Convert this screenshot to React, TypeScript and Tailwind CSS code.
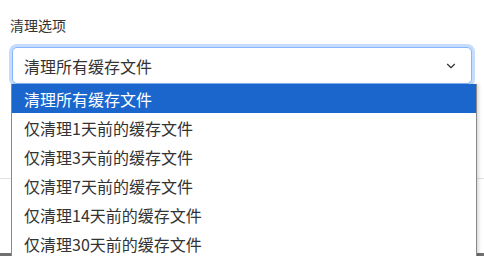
import { ChevronDown } from 'lucide-react'

const options = [
  '清理所有缓存文件',
  '仅清理1天前的缓存文件',
  '仅清理3天前的缓存文件',
  '仅清理7天前的缓存文件',
  '仅清理14天前的缓存文件',
  '仅清理30天前的缓存文件',
]

const App = () => {
  return (
    <main
      className="relative h-[256px] w-[484px] overflow-hidden bg-white text-[#333]"
      style={{ fontFamily: '"Microsoft YaHei", "Noto Sans CJK SC", sans-serif' }}
    >
      <div className="px-[10px] pt-[15px]">
        <label className="block text-[14px] leading-[20px]">清理选项</label>
        <div className="mx-[2px] mt-[12px] flex h-[37px] items-center justify-between rounded-[5px] border border-[#86b7fe] bg-white pl-[11px] pr-[13px] shadow-[0_0_0_3px_#c5dcfc]">
          <span className="text-[16px]">清理所有缓存文件</span>
          <ChevronDown className="h-[14px] w-[14px] text-[#333]" strokeWidth={2} />
        </div>
      </div>

      {/* page content behind the open list */}
      <div className="absolute left-0 right-0 top-[178px] h-px bg-[#e2e2e2]" />
      <div className="absolute bottom-0 left-0 right-0 h-[3px] bg-[#707070]" />

      <ul className="absolute left-[11px] top-[84px] w-[466px] border-x border-[#8a8a8a] bg-white shadow-[2px_0_3px_rgba(0,0,0,0.15)]">
        {options.map((o, i) => (
          <li
            key={o}
            className={
              i === 0
                ? 'flex h-[29px] items-center bg-[#1b66cc] pl-[12px] text-[16px] text-white'
                : 'flex h-[29px] items-center pl-[12px] text-[16px] text-[#333]'
            }
          >
            {o}
          </li>
        ))}
      </ul>
    </main>
  )
}

export default App
